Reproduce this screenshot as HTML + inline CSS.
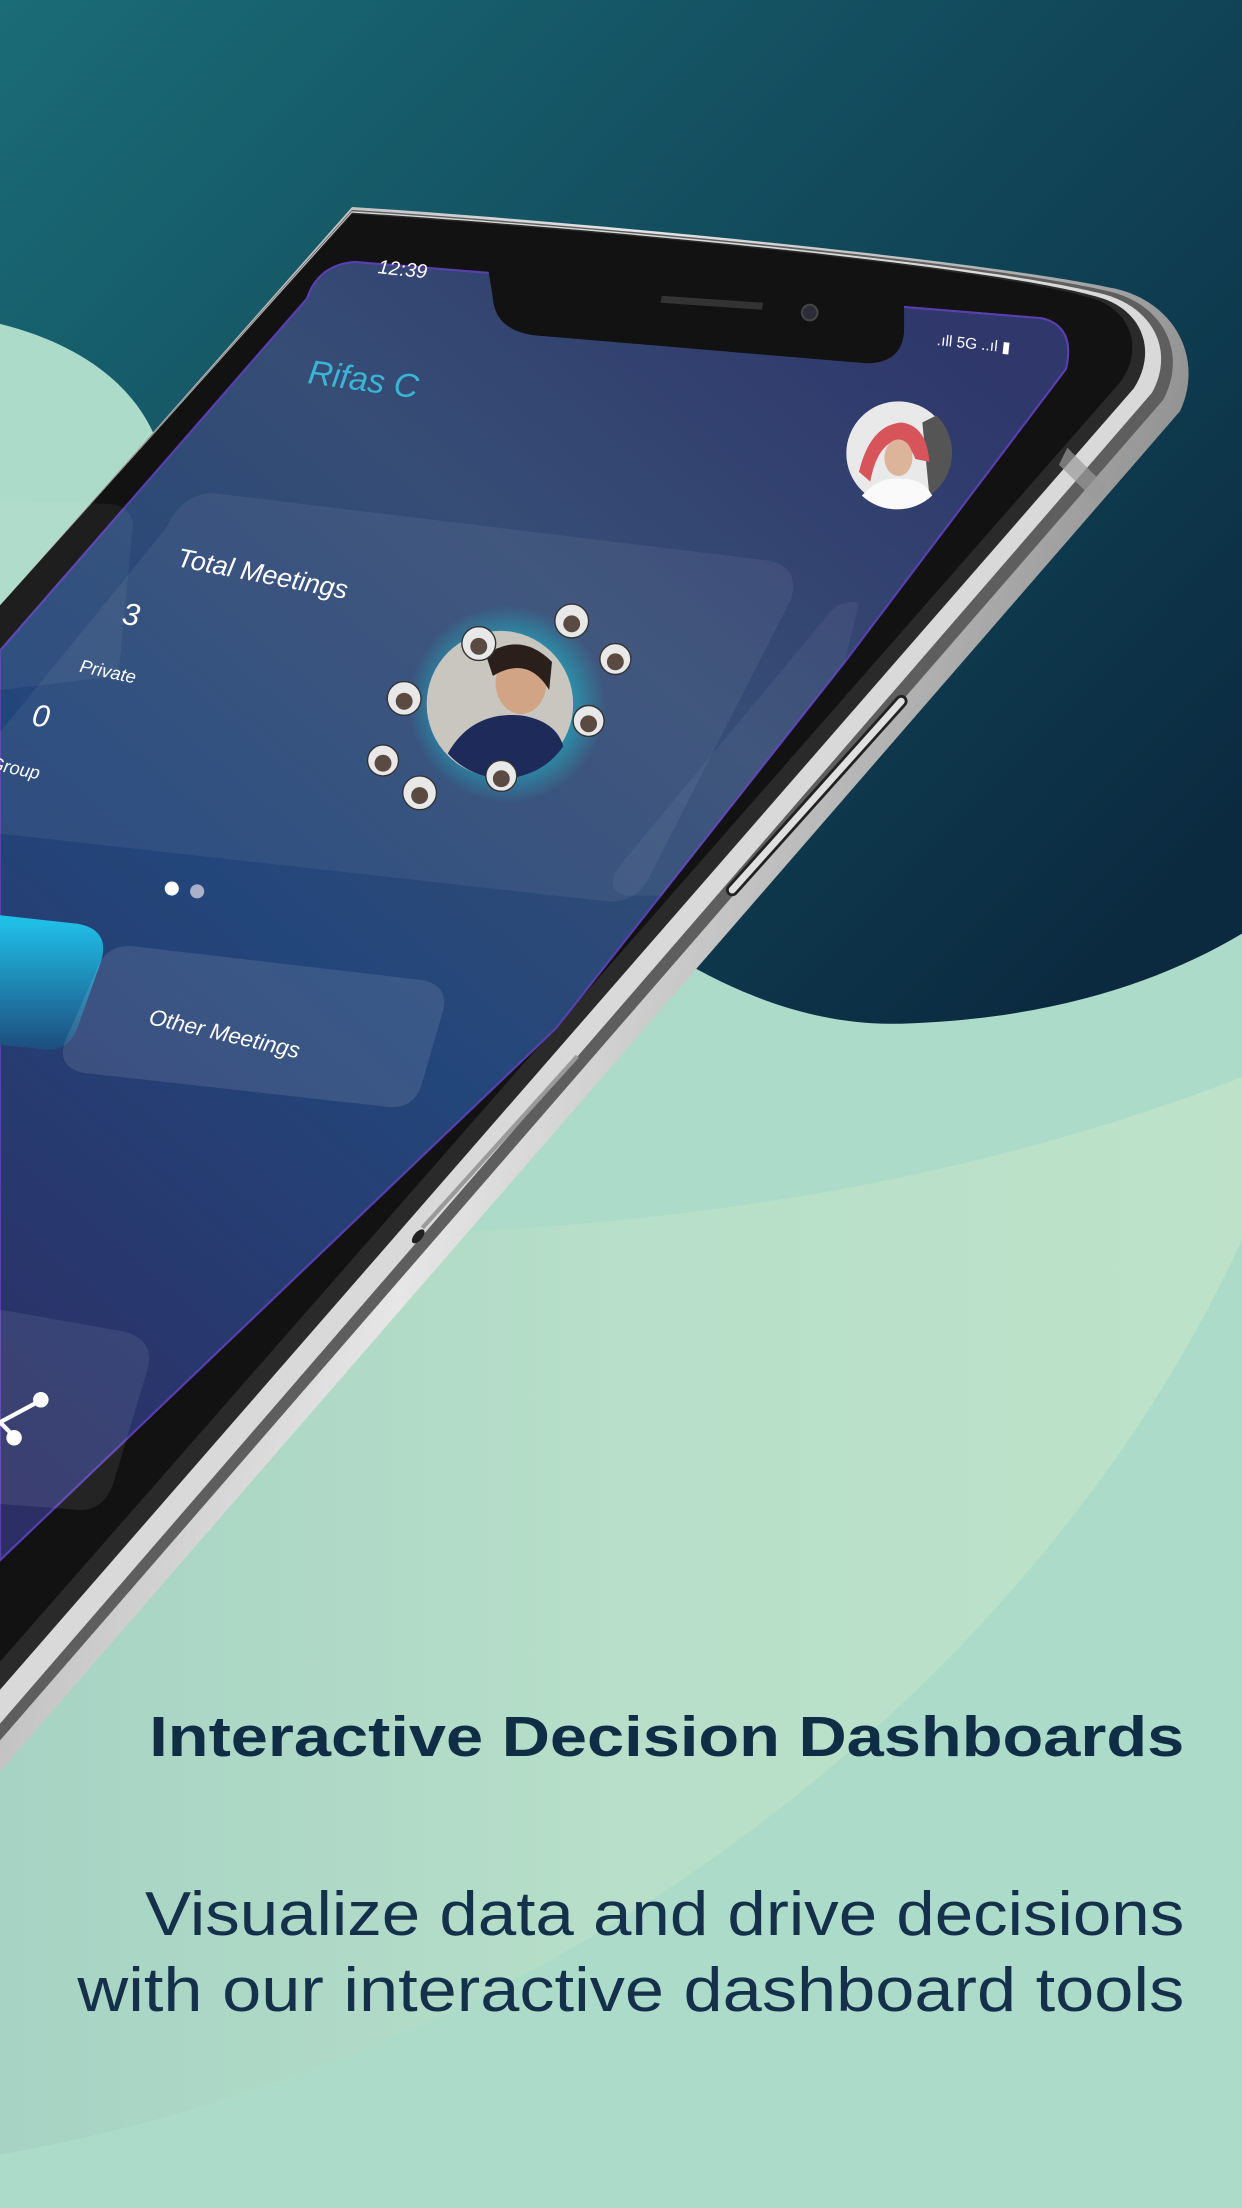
<!DOCTYPE html>
<html><head><meta charset="utf-8"><style>
html,body{margin:0;padding:0;width:1242px;height:2208px;overflow:hidden;background:#acdcc9}
svg{display:block}
</style></head><body>
<svg width="1242" height="2208" viewBox="0 0 882 1568" xmlns="http://www.w3.org/2000/svg">
<defs>
<linearGradient id="dark" x1="0" y1="0" x2="1" y2="0.8">
<stop offset="0" stop-color="#1a6c77"/><stop offset="0.5" stop-color="#124a5c"/><stop offset="1" stop-color="#0b2a40"/>
</linearGradient>
<linearGradient id="band" x1="0" y1="0" x2="1" y2="0">
<stop offset="0" stop-color="#a6d3c4"/><stop offset="0.5" stop-color="#b7dfc9"/><stop offset="1" stop-color="#bde2c9"/>
</linearGradient>
<linearGradient id="scr" x1="0.8" y1="0" x2="0.1" y2="1">
<stop offset="0" stop-color="#2f376b"/><stop offset="0.3" stop-color="#364d75"/><stop offset="0.6" stop-color="#23467a"/><stop offset="1" stop-color="#2b2f66"/>
</linearGradient>
<linearGradient id="silver" x1="0" y1="0" x2="1" y2="0.3">
<stop offset="0" stop-color="#9a9a9a"/><stop offset="0.5" stop-color="#e6e6e6"/><stop offset="1" stop-color="#8a8a8a"/>
</linearGradient>
<linearGradient id="cyan" x1="0" y1="0" x2="0" y2="1">
<stop offset="0" stop-color="#1fc4ec"/><stop offset="1" stop-color="#1d4d7e"/>
</linearGradient>
<radialGradient id="glow"><stop offset="0.6" stop-color="#1fb6c8"/><stop offset="1" stop-color="#1fb6c8" stop-opacity="0"/></radialGradient>
</defs>
<rect width="882" height="1568" fill="#acdcc9"/>
<path d="M0,0 H882 V663 C820,700 740,724 640,727 C590,728 540,715 480,680 L110,310 C95,275 60,245 0,230 Z" fill="url(#dark)"/>
<path d="M250,878 C500,872 700,835 882,765 L882,880 C760,1150 450,1450 0,1530 L0,1000 Z" fill="url(#band)"/>

<!-- phone silver -->
<path d="M250,147 C420,158 700,185 792,205 C835,215 855,255 838,292 L0,1258 L0,430 Z" fill="url(#silver)"/>
<path d="M250,149 C420,160 700,186 788,207 C828,217 843,252 826,284 L0,1236 L0,430 Z" fill="#5e5e5e"/>
<path d="M250,150 C420,161 700,187 784,209 C820,219 834,250 818,279 L0,1224 L0,430 Z" fill="#d9d9d9"/>
<path d="M250,151 C420,162 700,188 780,211 C812,220 822,250 805,276 L0,1200 L0,430 Z" fill="#2a2a2a"/>
<path d="M250,152 C420,163 700,189 776,212 C805,221 812,250 795,272 L0,1180 L0,430 Z" fill="#121212"/>
<!-- screen -->
<path d="M218,212 Q226,188 252,186 L740,226 Q764,232 757,262 L600,470 L395,730 L0,1108 L0,462 Z" fill="url(#scr)" stroke="#5a3fb0" stroke-width="1.5"/>
<!-- notch -->
<path d="M345,180 L642,202 L642,236 Q640,258 615,258 L378,238 Q352,234 350,212 Z" fill="#121212"/>
<path d="M470,210 L542,215 L541,220 L469,215 Z" fill="#333"/>
<circle cx="575" cy="222" r="5.5" fill="#2b2b3a" stroke="#444" stroke-width="1.5"/>
<text x="268" y="194" transform="rotate(6 268 194)" font-family="Liberation Sans,sans-serif" font-style="italic" font-size="14" fill="#fff">12:39</text>
<text x="665" y="245" transform="rotate(6 665 245)" font-family="Liberation Sans,sans-serif" font-size="11" fill="#fff">.ıll 5G ..ıl ▮</text>
<text x="218" y="272" transform="rotate(8 218 272)" font-family="Liberation Sans,sans-serif" font-style="italic" font-size="24" fill="#3bb4d6">Rifas C</text>
<!-- avatar -->
<circle cx="638" cy="322" r="37" fill="#e9e9e9"/>
<path d="M665,295 A37,37 0 0 1 660,352 L655,300 Z" fill="#555"/>
<path d="M610,335 Q618,302 640,300 Q658,302 660,328 L650,326 Q645,312 633,314 Q622,320 618,342 Z" fill="#d7545a"/>
<ellipse cx="638" cy="325" rx="10" ry="13" fill="#dcb49a"/>
<path d="M612,352 Q625,338 640,340 Q656,340 662,352 A37,37 0 0 1 612,352 Z" fill="#fafafa"/>
<!-- cards -->
<path d="M0,355 L80,358 Q97,362 94,378 L84,480 L0,490 Z" fill="#ffffff" fill-opacity="0.05"/>
<path d="M150,350 L545,398 Q568,402 562,425 L460,625 Q450,642 430,640 L0,592 L0,520 L118,375 Q128,352 150,350 Z" fill="#ffffff" fill-opacity="0.06"/>
<path d="M610,428 Q595,425 585,440 L440,615 Q428,632 445,636 L470,636 L600,470 Z" fill="#ffffff" fill-opacity="0.05"/>
<text x="125" y="402" transform="rotate(11 125 402)" font-family="Liberation Sans,sans-serif" font-style="italic" font-size="19" fill="#fff">Total Meetings</text>
<text x="86" y="443" transform="rotate(8 86 443)" font-family="Liberation Sans,sans-serif" font-style="italic" font-size="22" fill="#fff">3</text>
<text x="56" y="477" transform="rotate(12 56 477)" font-family="Liberation Sans,sans-serif" font-style="italic" font-size="13" fill="#fff">Private</text>
<text x="22" y="515" transform="rotate(8 22 515)" font-family="Liberation Sans,sans-serif" font-style="italic" font-size="22" fill="#fff">0</text>
<text x="-8" y="546" transform="rotate(12 -8 546)" font-family="Liberation Sans,sans-serif" font-style="italic" font-size="13" fill="#fff">Group</text>
<!-- group cluster -->
<circle cx="360" cy="500" r="70" fill="url(#glow)" opacity="0.7"/>
<circle cx="355" cy="500" r="52" fill="#c9c6bf"/>
<ellipse cx="370" cy="485" rx="18" ry="22" fill="#d2a486"/>
<path d="M345,465 Q370,448 392,470 L390,490 Q375,465 350,480 Z" fill="#2a1f1a"/>
<path d="M318,535 Q335,505 370,508 Q395,512 400,530 A52,52 0 0 1 318,535 Z" fill="#1d2a5a"/>
<g fill="#e8e8e8" stroke="#333" stroke-width="1">
<circle cx="406" cy="441" r="12"/><circle cx="437" cy="468" r="11"/><circle cx="418" cy="512" r="11"/>
<circle cx="356" cy="551" r="11"/><circle cx="298" cy="563" r="12"/><circle cx="272" cy="540" r="11"/>
<circle cx="287" cy="496" r="12"/><circle cx="340" cy="457" r="12"/>
</g>
<g fill="#5a4a42"><circle cx="406" cy="443" r="6"/><circle cx="437" cy="470" r="6"/><circle cx="418" cy="514" r="6"/><circle cx="356" cy="553" r="6"/><circle cx="298" cy="565" r="6"/><circle cx="272" cy="542" r="6"/><circle cx="287" cy="498" r="6"/><circle cx="340" cy="459" r="6"/></g>
<circle cx="122" cy="631" r="5" fill="#fff"/><circle cx="140" cy="633" r="5" fill="#aab0c8"/>
<!-- buttons -->
<path d="M0,650 L55,656 Q78,660 72,682 L55,730 Q48,748 30,745 L0,742 Z" fill="url(#cyan)"/>
<path d="M95,672 L300,696 Q320,700 314,720 L300,768 Q295,788 275,786 L60,762 Q40,758 46,740 L68,690 Q75,670 95,672 Z" fill="#ffffff" fill-opacity="0.1"/>
<text x="105" y="727" transform="rotate(13 105 727)" font-family="Liberation Sans,sans-serif" font-style="italic" font-size="16" fill="#fff">Other Meetings</text>
<path d="M0,930 L85,945 Q112,950 104,975 L80,1055 Q72,1075 52,1072 L0,1068 Z" fill="#ffffff" fill-opacity="0.08"/>
<g stroke="#fff" stroke-width="3" fill="#fff"><line x1="0" y1="1010" x2="28" y2="995"/><line x1="0" y1="1010" x2="10" y2="1020"/><circle cx="29" cy="994" r="4"/><circle cx="10" cy="1021" r="4"/></g>
<!-- side buttons -->
<path d="M640,498 L520,632" stroke="#222" stroke-width="9" fill="none" stroke-linecap="round"/>
<path d="M640,498 L520,632" stroke="#e0e0e0" stroke-width="5" fill="none" stroke-linecap="round"/>
<path d="M410,750 L300,872" stroke="#9a9a9a" stroke-width="3" fill="none"/>
<ellipse cx="297" cy="878" rx="3" ry="6" fill="#222" transform="rotate(40 297 878)"/>
<path d="M758,318 L785,345 L778,356 L752,330 Z" fill="#9a9a9a" opacity="0.7"/>
<!-- text -->
<text x="841" y="1247" text-anchor="end" textLength="735" lengthAdjust="spacingAndGlyphs" font-family="Liberation Sans,sans-serif" font-weight="bold" font-size="40" fill="#0f2d45">Interactive Decision Dashboards</text>
<text x="841" y="1374" text-anchor="end" textLength="738" lengthAdjust="spacingAndGlyphs" font-family="Liberation Sans,sans-serif" font-size="44" fill="#14304a">Visualize data and drive decisions</text>
<text x="841" y="1428" text-anchor="end" textLength="786" lengthAdjust="spacingAndGlyphs" font-family="Liberation Sans,sans-serif" font-size="44" fill="#14304a">with our interactive dashboard tools</text>
</svg>
</body></html>
